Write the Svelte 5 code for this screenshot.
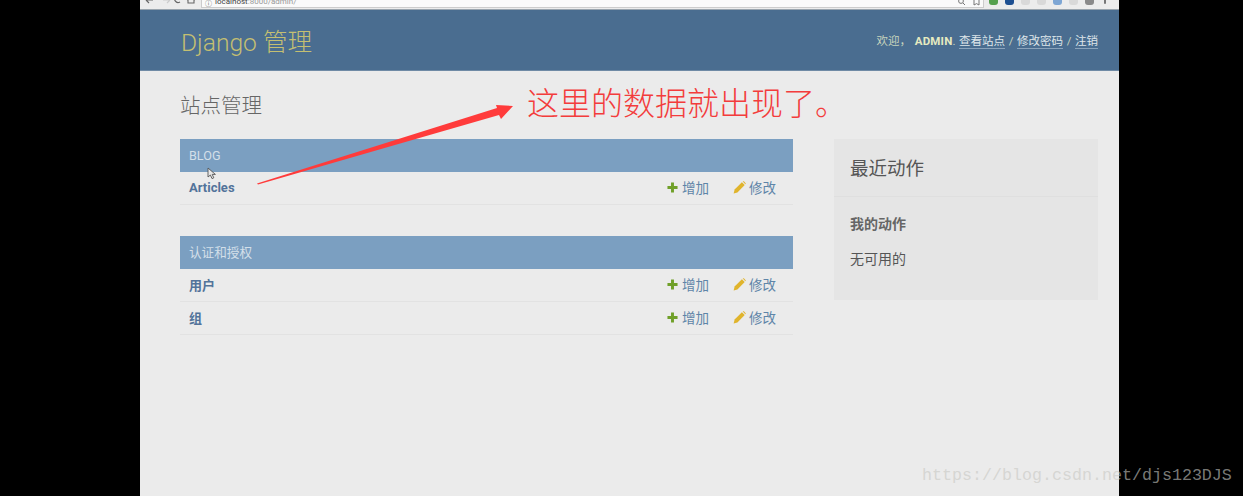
<script>
  const modules = [
    { caption: 'BLOG', rows: ['Articles'] },
    { caption: '认证和授权', rows: ['用户', '组'] }
  ];
</script>

<div class="screen">
  <main class="page">
    <div class="toolbar">
      <svg class="nav" viewBox="0 0 60 9" width="60" height="9" aria-hidden="true">
        <path d="M6 3H13M6 3L9 0M6 3L9 6" fill="none" stroke="#666" stroke-width="1.2" />
        <path d="M23 3H30M30 3L27 0M30 3L27 6" fill="none" stroke="#ccc" stroke-width="1.2" />
        <path d="M41 0A3.5 3.5 0 1 0 40 5" fill="none" stroke="#666" stroke-width="1.2" />
        <path d="M47 3L51 0L55 3M48 2.5V6H54V2.5" fill="none" stroke="#666" stroke-width="1.1" />
      </svg>
      <div class="address">
        <span class="info">ⓘ</span>
        <span class="url"><b>localhost</b>:8000/admin/</span>
        <svg class="addr-icons" viewBox="0 0 24 7" width="24" height="7" aria-hidden="true">
          <circle cx="3" cy="1" r="2.4" fill="none" stroke="#777" />
          <path d="M5 3L7 5" stroke="#777" />
          <path d="M16 0V5L18.5 3.6L21 5V0" fill="none" stroke="#777" />
        </svg>
      </div>
      <div class="exts">
        <i class="ext green"></i>
        <i class="ext navy"></i>
        <i class="ext pale"></i>
        <i class="ext pale"></i>
        <i class="ext blue"></i>
        <i class="ext pale"></i>
        <i class="ext dark"></i>
        <i class="ext dots"></i>
      </div>
    </div>

    <header class="head">
      <h1>Django 管理</h1>
      <div class="tools">
        欢迎， <strong>ADMIN</strong>. <a href="#a">查看站点</a> / <a href="#a">修改密码</a> / <a href="#a">注销</a>
      </div>
    </header>

    <section class="content">
      <h2>站点管理</h2>
      <div class="columns">
        <div class="apps">
          {#each modules as mod}
            <div class="module">
              <div class="caption">{mod.caption}</div>
              {#each mod.rows as row}
                <div class="row">
                  <a class="name" href="#a">{row}</a>
                  <a class="act add" href="#a">
                    <svg viewBox="0 0 12 12" width="11" height="11" aria-hidden="true">
                      <path d="M4.4 .5H7.6V4.4H11.5V7.6H7.6V11.5H4.4V7.6H.5V4.4H4.4Z" fill="#70a029" />
                    </svg>
                    增加
                  </a>
                  <a class="act edit" href="#a">
                    <svg viewBox="0 0 13 13" width="13" height="13" aria-hidden="true">
                      <path d="M.6 12.4L1.6 8.6L8.9 1.3L11.7 4.1L4.4 11.4Z" fill="#e0b42c" />
                      <path d="M9.7 .6L10.3 .3Q10.7 .1 11.1 .5L12.5 1.9Q12.9 2.3 12.7 2.7L12.4 3.3Z" fill="#e0b42c" />
                    </svg>
                    修改
                  </a>
                </div>
              {/each}
            </div>
          {/each}
        </div>

        <aside class="recent">
          <h3>最近动作</h3>
          <div class="recent-body">
            <h4>我的动作</h4>
            <p>无可用的</p>
          </div>
        </aside>
      </div>
    </section>
  </main>

  <!-- annotation drawn over the screenshot -->
  <svg class="arrow" viewBox="0 0 1243 496" width="1243" height="496" aria-hidden="true">
    <polygon points="257,183.4 497,108 496,105 513,106 501,119 499,115 258,184.4" fill="#ff3b3b" />
  </svg>
  <svg class="cursor" viewBox="0 0 10 13" width="10" height="13" aria-hidden="true">
    <path d="M1 1V10L3.4 8L5 11.6L6.8 10.8L5.2 7.4H8.4Z" fill="#e8e8e8" stroke="#555" stroke-width=".9" />
  </svg>
  <div class="note">这里的数据就出现了。</div>
  <div class="mark">https://blog.csdn.net/djs123DJS</div>
</div>

<style>
  :global(body) {
    margin: 0;
    background: #000;
  }

  .screen {
    position: relative;
    width: 1243px;
    height: 496px;
    overflow: hidden;
    background: #000;
    font-family: Roboto, "Noto Sans CJK SC", sans-serif;
  }

  .page {
    width: 979px;
    height: 496px;
    margin-left: 140px;
    background: #ebebeb;
  }

  .toolbar {
    display: flex;
    height: 9px;
    overflow: hidden;
    background: #ececec;
    border-bottom: 1px solid #9aa5ae;
  }

  .nav { flex: none; margin-top: -3px; }

  .address {
    display: flex;
    align-items: center;
    flex: 1;
    height: 7px;
    margin-left: 1px;
    padding-left: 3px;
    overflow: hidden;
    background: #fafafa;
    border: 1px solid #ccc;
    border-top: 0;
    font-size: 8px;
    line-height: 2px;
    color: #999;
  }

  .info { color: #666; font-size: 7px; margin-right: 3px; }
  .url { flex: 1; margin-top: -4px; }
  .url b { font-weight: 400; color: #444; }
  .addr-icons { flex: none; margin-right: 1px; }

  .exts {
    display: flex;
    gap: 7px;
    flex: none;
    width: 135px;
    padding-left: 5px;
    box-sizing: border-box;
  }

  .ext {
    flex: none;
    width: 9px;
    height: 5px;
    border-radius: 0 0 3px 3px;
  }
  .green { background: #55a04e; }
  .navy { background: #1d4f91; }
  .pale { background: #d9d9d9; }
  .blue { background: #7ea6d4; }
  .dark { background: #8a8a8a; }
  .dots { width: 2px; height: 4px; margin-left: 3px; background: #777; }

  .head {
    display: flex;
    align-items: center;
    justify-content: space-between;
    box-sizing: border-box;
    height: 61px;
    padding: 0 21px 0 41px;
    background: #4a6d90;
    border-bottom: 1px solid #6f8aa5;
  }

  h1 {
    margin: 0;
    font-size: 24.6px;
    font-weight: 300;
    color: #c4bf72;
  }

  .tools {
    font-size: 11.5px;
    word-spacing: .75px;
    color: #c6d4bd;
    white-space: pre-wrap;
  }
  .tools strong {
    font-weight: 700;
    letter-spacing: .2px;
    color: #e6eac0;
  }
  .tools a {
    color: #dfe6ea;
    text-decoration: none;
    border-bottom: 1px solid #8aa3bb;
  }

  .content { padding: 22px 21px 0 40px; }

  h2 {
    margin: 0 0 19px;
    font-size: 20.5px;
    line-height: 27px;
    font-weight: 300;
    color: #666;
  }

  .columns {
    display: flex;
    justify-content: space-between;
    align-items: flex-start;
  }

  .apps { width: 613px; }

  .module { margin-bottom: 31px; }

  .caption {
    height: 33px;
    padding-left: 9px;
    font-size: 12.6px;
    line-height: 34px;
    color: #d3dfe9;
    background: #7b9fc1;
  }

  .row {
    display: flex;
    align-items: center;
    box-sizing: border-box;
    height: 33px;
    padding: 0 17px 2px 9px;
    border-bottom: 1px solid #e2e2e2;
  }

  .name {
    flex: 1;
    font-size: 13px;
    font-weight: 700;
    color: #52739a;
    text-decoration: none;
  }

  .act {
    display: flex;
    align-items: center;
    font-size: 13.5px;
    color: #5e85a8;
    text-decoration: none;
  }
  .act svg { margin-right: 4px; }
  .edit { margin-left: 24px; }
  .edit svg { margin-right: 3px; }

  .recent {
    box-sizing: border-box;
    width: 264px;
    height: 161px;
    background: #e5e5e5;
  }

  .recent h3 {
    box-sizing: border-box;
    height: 58px;
    margin: 0;
    padding-left: 16px;
    font-size: 18.5px;
    line-height: 60px;
    font-weight: 400;
    color: #555;
    border-bottom: 1px solid #dfdfdf;
  }

  .recent-body { padding: 17px 16px 0; }

  .recent h4 {
    margin: 0 0 15px;
    font-size: 14px;
    line-height: 20px;
    font-weight: 700;
    color: #666;
  }

  .recent p {
    margin: 0;
    font-size: 14px;
    line-height: 20px;
    color: #555;
  }

  .arrow {
    position: absolute;
    left: 0;
    top: 0;
  }

  .cursor {
    position: absolute;
    left: 207px;
    top: 167px;
  }

  .note {
    position: absolute;
    left: 527px;
    top: 78px;
    font-family: "Noto Sans CJK SC", sans-serif;
    font-size: 32px;
    line-height: 46px;
    font-weight: 300;
    color: #f33c3c;
    white-space: nowrap;
  }

  .mark {
    position: absolute;
    left: 922px;
    top: 465px;
    font-family: "Liberation Mono", monospace;
    font-size: 16.67px;
    line-height: 22px;
    color: rgba(200, 200, 195, .62);
    white-space: nowrap;
  }
</style>
